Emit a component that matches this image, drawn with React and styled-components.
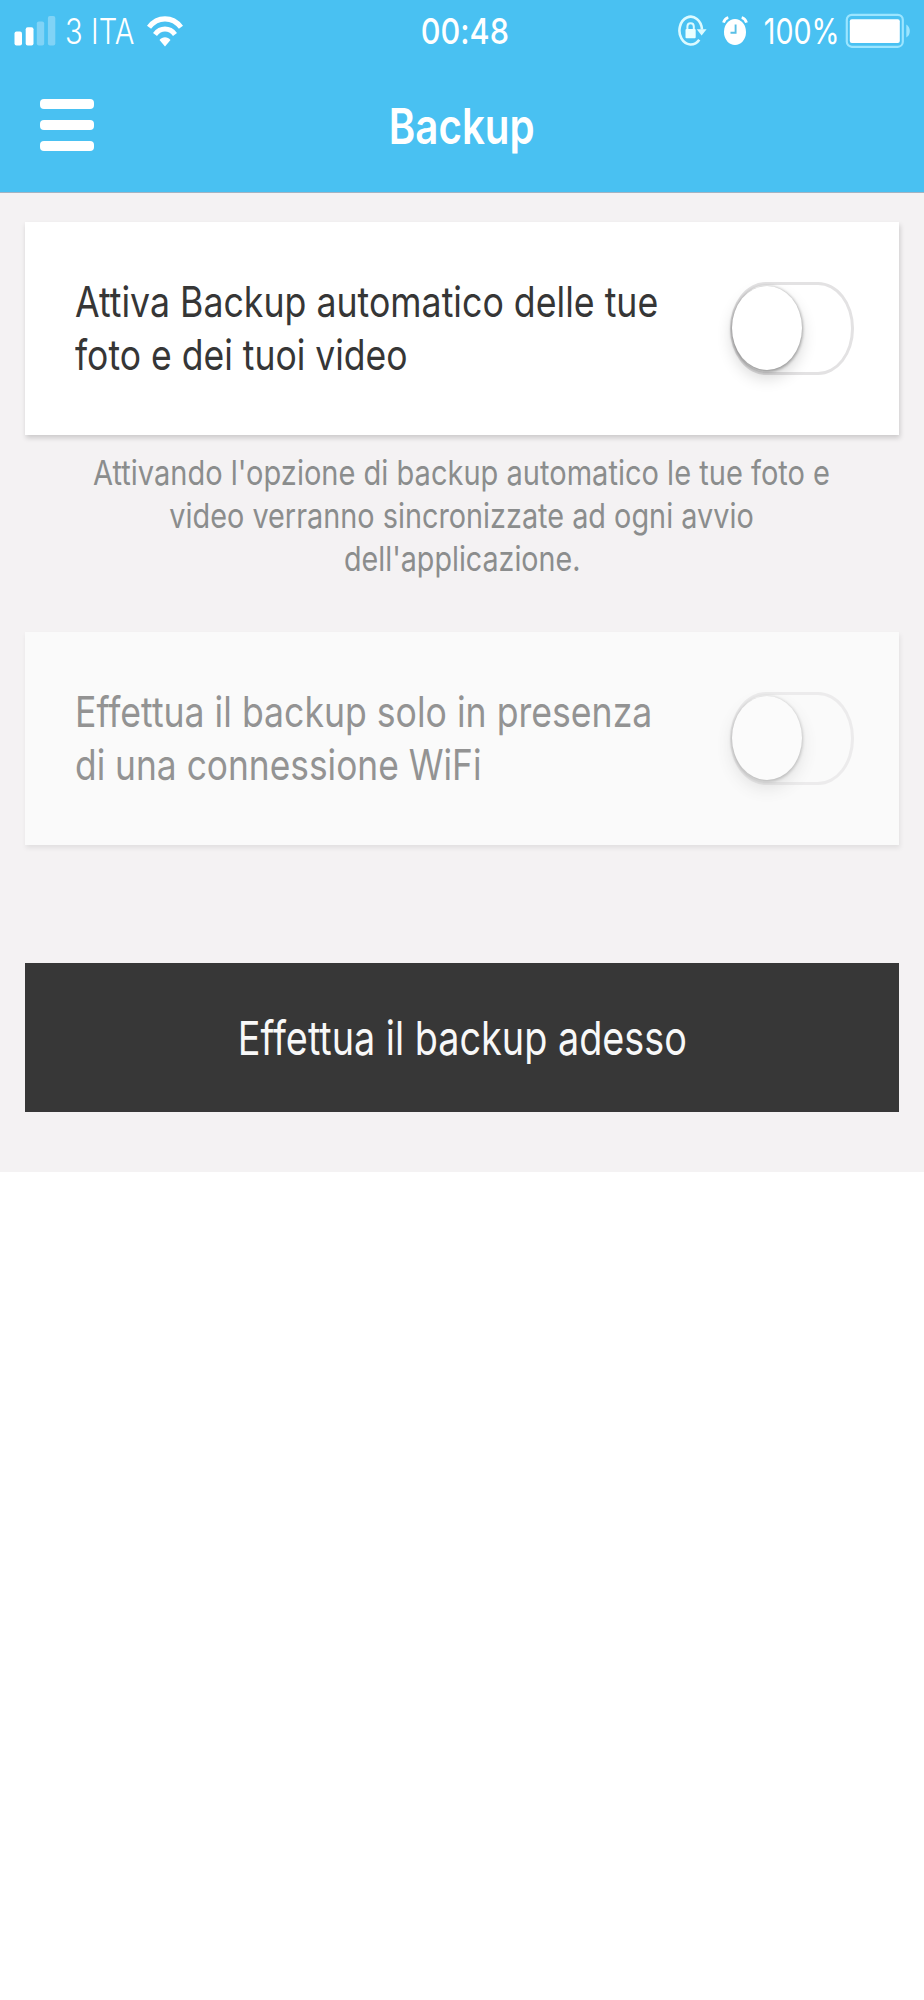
import React, { useState } from 'react'
import styled, { createGlobalStyle } from 'styled-components'

const GlobalStyle = createGlobalStyle`
  * {
    box-sizing: border-box;
  }

  body {
    margin: 0;
    background: #fff;
    font-family: Inter, 'Liberation Sans', sans-serif;
    font-variant-ligatures: none;
  }
`

function SignalIcon () {
  return (
    <svg width='42' height='30' viewBox='0 0 42 30' fill='#fff'>
      <rect x='0.5' y='15.5' width='7.5' height='14' rx='2' />
      <rect x='11.7' y='11.2' width='7.8' height='18.3' rx='2' />
      <rect x='22.8' y='5.5' width='7.4' height='24' rx='2' opacity='0.3' />
      <rect x='33.9' y='0' width='7.4' height='29.5' rx='2' opacity='0.3' />
    </svg>
  )
}

function WifiIcon () {
  return (
    <svg width='36' height='31' viewBox='0 0 36 31' fill='none' stroke='#fff'>
      <path d='M2 11.3C10.5 0 25.5 0 34 11.3' strokeWidth='5.2' />
      <path d='M8 18.4C13.5 11.2 22.5 11.2 28 18.4' strokeWidth='5' />
      <path d='M12.5 24C15.5 20.3 20.5 20.3 23.5 24L18 30.5Z' fill='#fff' stroke='none' />
    </svg>
  )
}

function RotationLockIcon () {
  return (
    <svg width='29' height='32' viewBox='0 0 29 32' fill='none' stroke='#dcfaff'>
      <path d='M21.3 24.7A11.3 13.9 0 1 1 24 14.5' strokeWidth='2.6' />
      <path d='M18.7 14.2H28.6L23.6 20.6Z' fill='#dcfaff' stroke='none' />
      <path d='M9.4 15V11.5C9.4 7.2 15.8 7.2 15.8 11.5V15' strokeWidth='2' />
      <rect x='7.5' y='14' width='10.2' height='9.3' rx='1' fill='#eaffff' stroke='none' />
    </svg>
  )
}

function AlarmIcon () {
  return (
    <svg width='26' height='30' viewBox='0 0 26 30' fill='none' stroke='#fff'>
      <ellipse cx='13' cy='16' rx='11' ry='13' fill='#fff' stroke='none' />
      <path d='M1.5 6.6Q2.8 2.4 6.3 1.5M24.5 6.6Q23.2 2.4 19.7 1.5' strokeWidth='2.8' />
      <path d='M13.6 8.5V16.7H8.5' stroke='#58bfe6' strokeWidth='1.9' />
    </svg>
  )
}

function BatteryIcon () {
  return (
    <svg width='66' height='36' viewBox='0 0 66 36'>
      <rect x='1.8' y='1.8' width='56' height='32' rx='5' fill='none' stroke='#9be5ff' strokeWidth='2.2' />
      <rect x='4.8' y='6.3' width='50' height='23.6' rx='2' fill='#fff' />
      <path d='M61.3 11.5Q64.8 13.5 64.8 18T61.3 24.5Z' fill='#9be5ff' />
    </svg>
  )
}

const Screen = styled.div`
  width: 924px;
  height: 1171.5px;
  background: #f4f2f3;
`

const Header = styled.header`
  height: 193px;
  background: #49c1f2;
  border-bottom: 1px solid #a3b3c2;
  color: #fff;
`

const StatusBar = styled.div`
  display: grid;
  grid-template-columns: 1fr 90px 1fr;
  align-items: center;
  height: 60px;
  padding: 2px 13px 0 14px;
`

const StatusGroup = styled.div`
  display: flex;
  align-items: center;
  justify-content: ${p => p.$end ? 'flex-end' : 'flex-start'};
  gap: ${p => p.$gap}px;

  svg {
    display: block;
    flex: none;
  }
`

// Fixed slot as wide as the condensed text inside it
const Slot = styled.div`
  display: flex;
  flex: none;
  justify-content: center;
  width: ${p => p.$width}px;
`

const Text = styled.span`
  display: block;
  flex: none;
  width: max-content;
  white-space: nowrap;
  font-size: ${p => p.$size}px;
  font-weight: ${p => p.$weight || 400};
  transform: scaleX(${p => p.$scale});
  transform-origin: ${p => p.$origin || 'center'};
`

const NavBar = styled.div`
  display: grid;
  grid-template-columns: 54.5px 1fr 54.5px;
  align-items: center;
  height: 132px;
  padding: 0 39.5px;
`

const MenuButton = styled.button`
  display: flex;
  flex-direction: column;
  gap: 11px;
  margin: 0 0 3px;
  padding: 0;
  border: 0;
  background: none;
`

const MenuBar = styled.span`
  height: 10px;
  border-radius: 4px;
  background: #fff;
`

const Title = styled.h1`
  display: flex;
  justify-content: center;
  margin: 0;
`

const Content = styled.main`
  padding: 29px 25px 0;
`

const Card = styled.section`
  display: flex;
  align-items: center;
  justify-content: space-between;
  height: 213px;
  padding: 0 45px 0 50px;
  background: ${p => p.$disabled ? '#fafafa' : '#fff'};
  box-shadow: 1px 3px 5px rgba(0, 0, 0, ${p => p.$disabled ? 0.08 : 0.17});
  color: ${p => p.$disabled ? '#939393' : '#363636'};
`

const CardLabel = styled.div`
  width: 600px;
  padding-top: 1px;
  line-height: 52.6px;
`

const Track = styled.button`
  display: flex;
  flex: none;
  width: 124px;
  height: 93px;
  padding: 1px 0;
  border: 3px solid #e3e2e3;
  border-radius: 36px / 46px;
  background: transparent;
  opacity: ${p => p.$disabled ? 0.6 : 1};
`

const Knob = styled.span`
  width: 70px;
  height: 84px;
  margin-left: -1px;
  border-radius: 50%;
  background: ${p => p.$disabled ? '#fcfcfc' : '#fff'};
  box-shadow: 0 1px 3px 1px rgba(0, 0, 0, 0.3), 0 8px 16px rgba(0, 0, 0, 0.16);
  transform: translateX(${p => p.$on ? 49 : 0}px);
`

const Hint = styled.div`
  display: flex;
  flex-direction: column;
  align-items: center;
  height: 197px;
  padding-top: 15.5px;
  color: #8b8d8d;
  line-height: 43px;
`

const BackupButton = styled.button`
  display: flex;
  align-items: center;
  justify-content: center;
  width: 100%;
  height: 149.5px;
  margin-top: 117.5px;
  padding: 0;
  border: 0;
  background: #373737;
  color: #f8f8f8;
  font-family: inherit;
  font-variant-ligatures: none;
`

function Toggle ({ disabled }) {
  const [on, setOn] = useState(false)
  return (
    <Track $disabled={disabled} disabled={disabled} onClick={() => setOn(!on)}>
      <Knob $on={on} $disabled={disabled} />
    </Track>
  )
}

export default function App () {
  return (
    <>
      <GlobalStyle />
      <Screen>
        <Header>
          <StatusBar>
            <StatusGroup $gap={11}>
              <SignalIcon />
              <Slot $width={66}><Text $size={36} $weight={300} $scale={0.81}>3 ITA</Text></Slot>
              <Slot $width={42}><WifiIcon /></Slot>
            </StatusGroup>
            <Slot $width={95}><Text $size={36} $weight={500} $scale={0.85}>00:48</Text></Slot>
            <StatusGroup $end $gap={15}>
              <RotationLockIcon />
              <AlarmIcon />
              <StatusGroup $gap={5}>
                <Slot $width={77}><Text $size={36} $scale={0.795}>100%</Text></Slot>
                <BatteryIcon />
              </StatusGroup>
            </StatusGroup>
          </StatusBar>
          <NavBar>
            <MenuButton>
              <MenuBar />
              <MenuBar />
              <MenuBar />
            </MenuButton>
            <Title><Text $size={49} $weight={600} $scale={0.822}>Backup</Text></Title>
          </NavBar>
        </Header>
        <Content>
          <Card>
            <CardLabel>
              <Text $size={42.5} $scale={0.84} $origin='left'>Attiva Backup automatico delle tue</Text>
              <Text $size={42.5} $scale={0.836} $origin='left'>foto e dei tuoi video</Text>
            </CardLabel>
            <Toggle />
          </Card>
          <Hint>
            <Text $size={34} $scale={0.854}>Attivando l'opzione di backup automatico le tue foto e</Text>
            <Text $size={34} $scale={0.848}>video verranno sincronizzate ad ogni avvio</Text>
            <Text $size={34} $scale={0.843}>dell'applicazione.</Text>
          </Hint>
          <Card $disabled>
            <CardLabel>
              <Text $size={42.5} $scale={0.838} $origin='left'>Effettua il backup solo in presenza</Text>
              <Text $size={42.5} $scale={0.831} $origin='left'>di una connessione WiFi</Text>
            </CardLabel>
            <Toggle disabled />
          </Card>
          <BackupButton>
            <Text $size={47} $scale={0.804}>Effettua il backup adesso</Text>
          </BackupButton>
        </Content>
      </Screen>
    </>
  )
}
